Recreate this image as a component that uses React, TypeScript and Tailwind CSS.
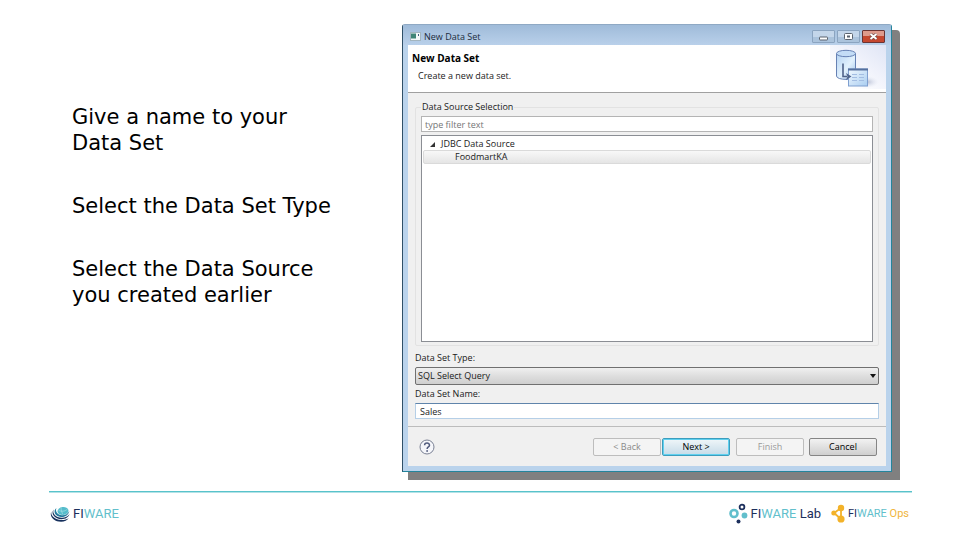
import React from "react";

const fieldText = "text-[9px] leading-[12px] text-[#1a1a1a]";

function DataSetArt() {
  return (
    <svg viewBox="0 0 56 44" className="h-[44px] w-[56px]" aria-hidden="true">
      <defs>
        <linearGradient id="haze" x1="0" y1="1" x2="1" y2="0">
          <stop offset="0.2" stopColor="#ffffff" />
          <stop offset="0.6" stopColor="#f0f2fb" />
          <stop offset="1" stopColor="#dfe5f5" />
        </linearGradient>
        <radialGradient id="shade">
          <stop offset="0" stopColor="#b4bcd2" />
          <stop offset="1" stopColor="#e6eaf5" stopOpacity="0" />
        </radialGradient>
        <linearGradient id="cylinder" x1="0" y1="0" x2="1" y2="1">
          <stop offset="0" stopColor="#b5d3f3" />
          <stop offset="0.55" stopColor="#e2f1fd" />
          <stop offset="1" stopColor="#9cc0e8" />
        </linearGradient>
        <linearGradient id="sheet" x1="0" y1="0" x2="1" y2="1">
          <stop offset="0" stopColor="#f2f9ff" />
          <stop offset="1" stopColor="#a9cdf0" />
        </linearGradient>
      </defs>
      <rect width="56" height="44" fill="url(#haze)" />
      <ellipse cx="37" cy="37" rx="12" ry="6" fill="url(#shade)" />
      <path d="M6.500 8.500 V31 C6.500 35.500 25.500 35.500 25.500 31 V8.500" fill="url(#cylinder)" stroke="#6681b4" />
      <ellipse cx="16" cy="8.500" rx="9.500" ry="3.200" fill="#c3dcf6" stroke="#6681b4" />
      <rect x="18.500" y="24" width="19" height="17" fill="url(#sheet)" stroke="#7f9fcf" />
      <path d="M18 24.500 H38" stroke="#56719f" strokeWidth="2" />
      <path d="M22 29.500h5M29 29.500h5M22 32.500h5M29 32.500h5M22 35.500h5M29 35.500h5" stroke="#a3bde2" />
      <path d="M13 18.500 V31.500 H17" fill="none" stroke="#4f6289" strokeWidth="1.600" />
      <path d="M16 28 L21.500 31.500 L16 35 L17.500 31.500 Z" fill="#4f6289" />
    </svg>
  );
}

function TitleBar() {
  const frame =
    "flex h-[13px] w-[23px] items-center justify-center rounded-[1px] border border-[#8ba4c0] bg-linear-to-b from-[#c4d6ea] from-50% to-[#abc3dc] to-50%";
  return (
    <div className="flex h-[20px] items-center bg-linear-to-b from-[#9fbbd9] to-[#b9d0ea] pt-[3px] pr-[6px] pl-[7px]">
      <svg viewBox="0 0 11 9" className="h-[9px] w-[11px]" aria-hidden="true">
        <rect x="0.500" y="0.500" width="10" height="8" fill="#f4f8f8" stroke="#a3b5bf" />
        <rect x="1" y="1.500" width="5" height="5" fill="#3f8576" />
        <path d="M8.500 2v2" stroke="#41607c" />
      </svg>
      <h1 className="ml-[3px] flex-1 text-[9px] leading-[12px] text-[#1b2b3b]">New Data Set</h1>
      <div className="flex gap-[2px]">
        <button aria-label="Minimize" className={frame}>
          <svg viewBox="0 0 9 5" className="mt-[3px] h-[5px] w-[9px]">
            <rect x="0.500" y="1" width="8" height="3" rx="0.500" fill="#fff" stroke="#5b636e" />
          </svg>
        </button>
        <button aria-label="Maximize" className={frame}>
          <svg viewBox="0 0 9 7" className="h-[7px] w-[9px]">
            <rect x="0.500" y="0.500" width="8" height="6" rx="1" fill="#fff" stroke="#5b636e" />
            <rect x="3" y="2.500" width="3" height="2" fill="#5b636e" />
          </svg>
        </button>
        <button
          aria-label="Close"
          className="flex h-[13px] w-[23px] items-center justify-center rounded-[1px] border border-[#6b3434] bg-linear-to-b from-[#de9a8c] from-45% to-[#c5472f] to-50%"
        >
          <svg viewBox="0 0 9 7" className="h-[7px] w-[9px]">
            <path d="M1.500 1 L7.500 6 M7.500 1 L1.500 6" stroke="#6b4444" strokeWidth="3.200" />
            <path d="M1.500 1 L7.500 6 M7.500 1 L1.500 6" stroke="#fff" strokeWidth="2" />
          </svg>
        </button>
      </div>
    </div>
  );
}

function SourceSelection() {
  return (
    <fieldset className="mx-[7px] rounded-[2px] border border-[#e2e2e2] px-[5px] pb-[3px]">
      <legend className={`${fieldText} px-px`}>Data Source Selection</legend>
      <input
        aria-label="Filter data sources"
        placeholder="type filter text"
        className="mt-[3px] block h-[16px] w-full border border-[#b4b4b4] bg-white px-[3px] text-[9px] leading-[12px] placeholder:text-[#757575]"
      />
      <ul className="mt-[3px] h-[207px] border border-[#8b8e94] bg-white px-px pt-[2px]">
        <li>
          <div className={`${fieldText} flex h-[12px] items-center pl-[7px]`}>
            <svg viewBox="0 0 5 5" className="h-[5px] w-[5px]" aria-hidden="true">
              <path d="M5 0 V5 H0 Z" fill="#333" />
            </svg>
            <span className="ml-[6px]">JDBC Data Source</span>
          </div>
          <ul>
            <li
              className={`${fieldText} flex h-[14px] items-center rounded-[2px] border border-[#dadada] bg-linear-to-b from-[#f8f8f8] to-[#e5e5e5] pl-[31px]`}
            >
              FoodmartKA
            </li>
          </ul>
        </li>
      </ul>
    </fieldset>
  );
}

function Dialog() {
  const button = "h-[18px] w-[68px] rounded-[2px] border text-[9px] leading-[12px]";
  return (
    <section className="min-w-0 flex-1 self-start rounded-t-[3px] border border-t-[#8fa9c4] border-r-[#23859c] border-b-[#23859c] border-l-[#2f5068] bg-[#bad3ec] font-['Open_Sans','Noto_Sans',sans-serif] shadow-[7px_7px_0_1px_#808080]">
      <TitleBar />
      <div className="mx-[5px] mb-[5px] bg-[#f0f0f0]">
        <header className="flex h-[48px] items-start justify-between border-b border-[#a0a0a0] bg-white">
          <div className="pt-[6px] pl-[4px]">
            <h2 className="text-[10px] leading-[14px] font-bold text-black">New Data Set</h2>
            <p className={`${fieldText} mt-[5px] pl-[6px]`}>Create a new data set.</p>
          </div>
          <DataSetArt />
        </header>
        <form onSubmit={(e) => e.preventDefault()}>
          <div className="pt-[8px]">
            <SourceSelection />
          </div>
          <div className="mt-[6px] px-[7px]">
            <label htmlFor="type" className={`${fieldText} block`}>
              Data Set Type:
            </label>
            <div className="relative mt-[3px]">
              <select
                id="type"
                className={`${fieldText} block h-[18px] w-full appearance-none rounded-[2px] border border-[#707070] bg-linear-to-b from-[#f0f0f0] via-[#dedede] to-[#cfcfcf] px-[2px]`}
              >
                <option>SQL Select Query</option>
              </select>
              <svg viewBox="0 0 6 4" className="pointer-events-none absolute top-[7px] right-[3px] h-[4px] w-[6px]" aria-hidden="true">
                <path d="M0 0h6L3 4z" fill="#111" />
              </svg>
            </div>
            <label htmlFor="name" className={`${fieldText} mt-[3px] block`}>
              Data Set Name:
            </label>
            <input
              id="name"
              defaultValue="Sales"
              className={`${fieldText} mt-[3px] block h-[16px] w-full border border-[#b5cfe7] border-t-[#5f84ab] bg-white px-[4px]`}
            />
          </div>
          <footer className="mt-[7px] flex h-[40px] items-center border-t border-[#bcbcbc] pr-[9px] pl-[11px]">
            <button type="button" aria-label="Help">
              <svg viewBox="0 0 16 16" className="h-[16px] w-[16px]">
                <circle cx="8" cy="8" r="7" fill="#f5f6fa" stroke="#7a8194" />
                <path d="M5.600 6.300C5.600 3.400 10.500 3.400 10.500 6.200C10.500 7.900 8.100 8 8.100 9.900" fill="none" stroke="#525c7e" strokeWidth="1.500" />
                <circle cx="8.100" cy="12" r="0.900" fill="#525c7e" />
              </svg>
            </button>
            <div className="ml-auto flex">
              <button type="button" disabled className={`${button} border-[#bdbdbd] bg-[#f4f4f4] text-[#8a8a8a]`}>
                &lt; Back
              </button>
              <button
                type="submit"
                className={`${button} ml-px border-[#3c9dbd] bg-linear-to-b from-[#f0f6f9] to-[#c5dbe8] text-black shadow-[inset_0_0_0_1px_#5fd0ef]`}
              >
                Next &gt;
              </button>
              <button type="button" disabled className={`${button} ml-[6px] border-[#bdbdbd] bg-[#f4f4f4] text-[#9a9a9a]`}>
                Finish
              </button>
              <button type="button" className={`${button} ml-[5px] border-[#858585] bg-linear-to-b from-[#f2f2f2] to-[#cfcfcf] text-black`}>
                Cancel
              </button>
            </div>
          </footer>
        </form>
      </div>
    </section>
  );
}

function Wordmark({ suffix, tone, size }: { suffix?: string; tone?: string; size: string }) {
  return (
    <span className={`${size} font-['Roboto',sans-serif] leading-[16px] whitespace-nowrap text-[#62bfcc]`}>
      <span className="text-[#1c2f5c]">FI</span>WARE
      {suffix && <span className={tone}> {suffix}</span>}
    </span>
  );
}

function BrandBar() {
  return (
    <footer className="mr-[48px] ml-[49px] flex items-center border-t border-[#58c3cb] pt-[11px] shadow-[inset_0_1px_0_#b4e2e6]">
      <div className="flex items-center gap-[3px] pl-[1px]">
        <svg viewBox="0 0 20 16" className="h-[16px] w-[20px]" aria-hidden="true">
          <ellipse cx="13" cy="5" rx="5.500" ry="4" fill="#55bccb" transform="rotate(-8 13 5)" />
          <path d="M8.500 4C11 6 15 5.500 17.500 3M11 1.500C11 4 12 7 13 8.500" fill="none" stroke="#b5e4e9" strokeWidth="0.600" />
          <path d="M6.500 2C2.500 5 5 10.500 11 11C15.500 11.300 19 8.500 19.300 5C18 8 15 9.400 12 9.200C7.500 9 4.800 5.500 6.500 2Z" fill="#257a9d" />
          <path d="M3.500 3.500C0.500 8 5 13.200 11.500 13.200C15.500 13.200 18.500 11.300 19.500 8C17.500 10.800 15 11.900 11.500 11.700C6 11.500 2.300 8 3.500 3.500Z" fill="#16305c" />
          <path d="M1.300 5.500C-1 11 4.500 15.800 11 15.800C14.500 15.800 17.500 14.300 18.800 12C16.500 13.700 14 14.200 11 14C5 13.600 0.500 10 1.300 5.500Z" fill="#16305c" />
        </svg>
        <Wordmark size="text-[13px]" />
      </div>
      <div className="ml-auto flex items-center pr-[3px]">
        <svg viewBox="0 0 19 21" className="h-[21px] w-[19px]" aria-hidden="true">
          <circle cx="5" cy="10.500" r="3.500" fill="#fff" stroke="#62bfcc" strokeWidth="2.600" />
          <circle cx="13" cy="4" r="2.400" fill="#fff" stroke="#1c2f5c" strokeWidth="1.800" />
          <circle cx="15.500" cy="12.500" r="2.900" fill="#62bfcc" />
          <circle cx="9.500" cy="18.500" r="2" fill="#1c2f5c" />
        </svg>
        <span className="ml-[3px] flex">
          <Wordmark size="text-[13px]" suffix="Lab" tone="text-[#1c2f5c]" />
        </span>
        <svg viewBox="0 0 14 19" className="ml-[10px] h-[19px] w-[14px]" aria-hidden="true">
          <path d="M10 4L3 9L10 15M10 4V15" fill="none" stroke="#f3b229" strokeWidth="1.800" />
          <circle cx="10" cy="4" r="3.200" fill="#f3b229" />
          <circle cx="2.800" cy="9" r="2.500" fill="#f3b229" />
          <circle cx="10" cy="15" r="3.600" fill="#f3b229" />
        </svg>
        <span className="ml-[3px] flex">
          <Wordmark size="text-[11px]" suffix="Ops" tone="text-[#f0b53c]" />
        </span>
      </div>
    </footer>
  );
}

export default function App() {
  return (
    <div className="flex min-h-screen flex-col bg-white">
      <main className="flex pt-[24px] pr-[68px]">
        <div className="w-[402px] shrink-0 space-y-[37px] pt-[80px] pr-[60px] pl-[72px] font-['DejaVu_Sans',sans-serif] text-[21px] leading-[26px] text-black">
          <p>
            Give a name to your
            <br />
            Data Set
          </p>
          <p className="whitespace-nowrap">Select the Data Set Type</p>
          <p>
            Select the Data Source
            <br />
            you created earlier
          </p>
        </div>
        <Dialog />
      </main>
      <div className="mt-[19px]">
        <BrandBar />
      </div>
    </div>
  );
}
